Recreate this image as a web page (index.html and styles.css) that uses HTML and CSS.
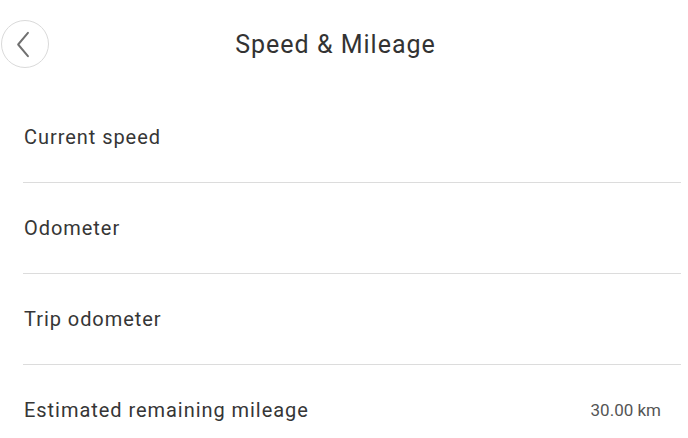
FILE: index.html
```html
<!DOCTYPE html>
<html lang="en">
<head>
<meta charset="utf-8">
<title>Speed &amp; Mileage</title>
<link rel="stylesheet" href="styles.css">
</head>
<body>
<div class="page">
  <header class="header">
    <button class="back" aria-label="Back">
      <svg width="47" height="47" viewBox="0 0 47 47">
        <path d="M26.5 11.5 L16.5 23.5 L26.5 35.5" fill="none" stroke="#707070" stroke-width="2" stroke-linecap="round" stroke-linejoin="round"/>
      </svg>
    </button>
    <h1 class="title">Speed &amp; Mileage</h1>
  </header>
  <ul class="list">
    <li class="row"><span class="label">Current speed</span></li>
    <li class="row"><span class="label">Odometer</span></li>
    <li class="row"><span class="label">Trip odometer</span></li>
    <li class="row"><span class="label">Estimated remaining mileage</span><span class="value">30.00 km</span></li>
  </ul>
</div>
</body>
</html>
```
FILE: styles.css
```css
html, body {
  margin: 0;
  padding: 0;
  background: #ffffff;
}
body {
  font-family: Roboto, "Noto Sans", "Liberation Sans", sans-serif;
  color: #333333;
}
.page {
  width: 688px;
  height: 438px;
  overflow: hidden;
}
.header {
  position: relative;
  height: 92px;
  display: flex;
  align-items: center;
  justify-content: center;
}
.back {
  position: absolute;
  left: 1px;
  top: 20px;
  width: 48px;
  height: 48px;
  padding: 0;
  margin: 0;
  border: 1px solid #dadada;
  border-radius: 50%;
  background: #ffffff;
  display: flex;
  align-items: center;
  justify-content: center;
}
.back svg {
  display: block;
}
.title {
  margin: 0 17px 0 0;
  font-size: 25px;
  font-weight: 400;
  letter-spacing: 1px;
  color: #333333;
  line-height: 1;
  padding-bottom: 4px;
}
.list {
  list-style: none;
  margin: 0 7px 0 23px;
  padding: 0;
}
.row {
  height: 90px;
  border-bottom: 1px solid #dcdcdc;
  display: flex;
  align-items: center;
  justify-content: space-between;
  padding: 0 20px 0 1px;
}
.row:last-child {
  border-bottom: none;
}
.label {
  font-size: 20px;
  letter-spacing: 0.95px;
  color: #363636;
}
.value {
  font-size: 17px;
  color: #555555;
}
```
